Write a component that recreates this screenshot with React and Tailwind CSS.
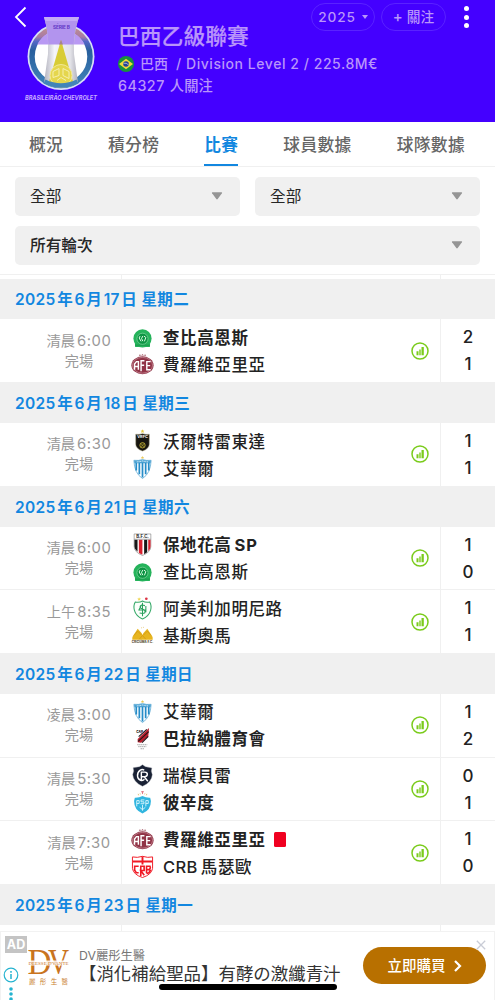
import React from "react";

const days = [
    {
        date: ["2025", "年", "6", "月", "17", "日 星期二"],
        matches: [
            {
                period: "清晨",
                time: "6:00",
                home: { name: "查比高恩斯", logo: "chape", score: 2, win: true },
                away: { name: "費羅維亞里亞", logo: "afe", score: 1 },
            },
        ],
    },
    {
        date: ["2025", "年", "6", "月", "18", "日 星期三"],
        matches: [
            {
                period: "清晨",
                time: "6:30",
                home: { name: "沃爾特雷東達", logo: "volta", score: 1 },
                away: { name: "艾華爾", logo: "avai", score: 1 },
            },
        ],
    },
    {
        date: ["2025", "年", "6", "月", "21", "日 星期六"],
        matches: [
            {
                period: "清晨",
                time: "6:00",
                home: { name: "保地花高", latinAfter: "SP", logo: "botafogo", score: 1, win: true },
                away: { name: "查比高恩斯", logo: "chape", score: 0 },
            },
            {
                period: "上午",
                time: "8:35",
                home: { name: "阿美利加明尼路", logo: "america", score: 1 },
                away: { name: "基斯奧馬", logo: "criciuma", score: 1 },
            },
        ],
    },
    {
        date: ["2025", "年", "6", "月", "22", "日 星期日"],
        matches: [
            {
                period: "凌晨",
                time: "3:00",
                home: { name: "艾華爾", logo: "avai", score: 1 },
                away: { name: "巴拉納體育會", logo: "cap", score: 2, win: true },
            },
            {
                period: "清晨",
                time: "5:30",
                home: { name: "瑞模貝雷", logo: "remo", score: 0 },
                away: { name: "彼辛度", logo: "paysandu", score: 1, win: true },
            },
            {
                period: "清晨",
                time: "7:30",
                home: { name: "費羅維亞里亞", logo: "afe", score: 1, win: true, redCard: true },
                away: { name: "馬瑟歐", latinBefore: "CRB", logo: "crb", score: 0 },
            },
        ],
    },
    { date: ["2025", "年", "6", "月", "23", "日 星期一"], matches: [] },
];

const tabs = [
    { label: "概況" },
    { label: "積分榜" },
    { label: "比賽", active: true },
    { label: "球員數據" },
    { label: "球隊數據" },
];

// Club crests, all drawn on a 24x24 grid
const crests = {
    chape: (
        <>
            <circle cx="12" cy="13" r="9.500" fill="#25b35b" />
            <path d="M4 17.500h16l-.3 4.300H4.300z" fill="#25b35b" />
            <path d="M4.300 20h15.400" stroke="#178d47" strokeWidth=".8" />
            <circle cx="12" cy="13.300" r="5.800" fill="#0c9443" stroke="#8bd8a5" strokeWidth=".7" />
            <path d="M9.500 10.500l-1 2 2 3.500M12.300 10.500L11 13l1.300 2.800M13.500 10.500l2 1.500-1.500 4" stroke="#e4ffe9" strokeWidth="1" fill="none" />
        </>
    ),
    afe: (
        <>
            <path d="M8.500 3.500l.8-1.800.8 1.800M11.200 3l.8-1.800.8 1.800M13.900 3.500l.8-1.800.8 1.800" stroke="#a55a68" strokeWidth=".7" fill="none" />
            <ellipse cx="12" cy="12.800" rx="11.600" ry="9.300" fill="#913447" />
            <ellipse cx="12" cy="12.800" rx="10.500" ry="8.200" fill="none" stroke="#d9a9b3" strokeWidth=".6" />
            <path d="M3.700 17.500v-6l2-2.500h2v8.500M3.700 14h4M10.500 19V8H14M10.500 12.800h3.200M20.500 9h-4v8.500h4M16.500 13.200h3.500" stroke="#fff" strokeWidth="1.500" fill="none" />
        </>
    ),
    volta: (
        <>
            <path d="M12 .3l.6 1.300 1.400.1-1 1 .3 1.400-1.300-.7-1.300.7.3-1.400-1-1 1.400-.1z" fill="#e6cb48" />
            <path d="M5 5.500q3.300.6 7-.6 3.700 1.200 7 .6v10.500q0 4.500-7 7-7-2.500-7-7z" fill="#17150f" stroke="#8c8562" strokeWidth=".5" />
            <text x="12" y="9.500" fontSize="4" fontWeight="700" textAnchor="middle" fill="#fff">VRFC</text>
            <circle cx="12" cy="17" r="2.800" fill="#332e10" stroke="#d0bd3b" strokeWidth=".8" />
            <path d="M10 15l4 4M14 15l-4 4" stroke="#d0bd3b" strokeWidth=".5" />
        </>
    ),
    avai: (
        <>
            <path d="M12 0l.5 1.100 1.200.1-.9.800.3 1.200-1.100-.6-1.100.6.3-1.200-.9-.8 1.200-.1z" fill="#e9c95b" />
            <path d="M3 4.500q5 .6 9-.8 4 1.400 9 .8-.4 13.500-9 19-8.600-5.500-9-19z" fill="#fff" stroke="#5aa9d4" strokeWidth=".8" />
            <path d="M3.200 4.600q5 .5 8.800-.7 3.800 1.200 8.800.7l-.3 3H3.500z" fill="#4da3d3" />
            <path d="M5.500 7v8M8.700 7v12M12 7v15.500M15.300 7v12M18.500 7v8" stroke="#268cc8" strokeWidth="1.800" />
            <path d="M6 6.200l3-.3 3-.7 3 .7 3 .3" stroke="#eff8ff" strokeWidth=".9" fill="none" strokeDasharray="1.200 .6" />
        </>
    ),
    botafogo: (
        <>
            <path d="M3.300 1h17.400v13q0 6-8.700 9.500Q3.300 20 3.300 14z" fill="#fff" stroke="#777" strokeWidth=".6" />
            <text x="12" y="5.600" fontSize="4.500" fontWeight="700" textAnchor="middle" fill="#222">B.F.C.</text>
            <path d="M3.600 7h3.200v12.500Q3.600 17 3.600 14zM13.700 7h3.200v13.200l-3.200 2z" fill="#171717" />
            <path d="M8.200 7h3.700v15.800l-3.700-2zM18 7h2.400v7q0 3-2.400 5z" fill="#d9202f" />
            <path d="M3.500 6.500h17" stroke="#777" strokeWidth=".6" />
        </>
    ),
    america: (
        <>
            <path d="M8.500 .8l.4.900h1l-.7.700.3 1-1-.5-1 .5.300-1-.7-.7h1z" fill="#eed54e" stroke="#eed54e" strokeWidth=".5" />
            <circle cx="16" cy="1.800" r="1.400" fill="#db3344" />
            <path d="M4.500 5.200Q8.500 6.200 12 4.200q3.500 2 7.500 1 2.200 3.500 1 8.500-1.500 6-8.500 9.300-7-3.300-8.500-9.300-1.200-5 1-8.500z" fill="#fbfffc" stroke="#35a968" strokeWidth="1.100" />
            <path d="M12 6v14M14.500 9q-5-1.500-5 1 0 2 2.500 2.500 2.700.8 2.700 2.800 0 2.700-5.700 1.500M8 14l3-6M15.500 9.500v6.500M8 13.500h8" stroke="#29a05c" strokeWidth="1.100" fill="none" />
        </>
    ),
    criciuma: (
        <>
            <path d="M1.300 16.500q-.5-3 1.700-5.500l4-6 4 4.500 1 2 1-2 4-4.500 4 6q2.200 2.500 1.700 5.500z" fill="#e7b51f" />
            <path d="M3 12l4-4.500 4 4M13 11.500l4-4 4 4.500M8.500 16l3.500-4 3.500 4" stroke="#c78d13" strokeWidth=".6" fill="none" />
            <path d="M10.500 4h.7M12.500 3.500h.7" stroke="#d8a72a" strokeWidth=".8" />
            <text x="12" y="20" fontSize="3.200" fontWeight="700" textAnchor="middle" fill="#4c4020" textLength="22.500" lengthAdjust="spacingAndGlyphs">CRICIÚMA E.C.</text>
        </>
    ),
    cap: (
        <>
            <path d="M7 12.500L18.800 1 18 10l-7.500 6.500-3.500-.5z" fill="#b81f2d" />
            <path d="M8 10L16.500 2.500M7.500 15L18.500 4.800M11.500 16.300l6.500-6.500" stroke="#25171a" strokeWidth="1.200" />
            <text x="9" y="6.500" fontSize="4.200" fontWeight="800" textAnchor="middle" fill="#222" textLength="7" lengthAdjust="spacingAndGlyphs">CAP</text>
            <path d="M6.500 18.500h10.500M7.500 20.500h8.500M10 22.700h4" stroke="#999" strokeWidth=".9" strokeDasharray="1.500 .5" />
        </>
    ),
    remo: (
        <>
            <path d="M12 .8l3 2 6.700 1.300q-1.500 3.500.5 7Q21.500 19 12 23.200 2.500 19 1.800 11q2-3.500.5-7L9 2.800z" fill="#192134" stroke="#8b909c" strokeWidth=".4" />
            <path d="M13.800 6.500q-2-1.500-4.500.2Q6.500 9 6.800 12.500T10 17q2.500.8 4-1M10.800 18V8.500h3.500q3 .2 2.700 2.600-.3 2.100-3 2.200h-3M14 13.500l3.500 4.500" stroke="#fff" strokeWidth="1.500" fill="none" />
        </>
    ),
    paysandu: (
        <>
            <path d="M12 .2v3M10.500.8h3" stroke="#df7582" strokeWidth="1" />
            <path d="M7.500 3l.5 1.500M16.500 3L16 4.500M9.500 2.500l.3 1M14.500 2.500l-.3 1" stroke="#ddb966" strokeWidth=".9" />
            <path d="M4 7Q8.500 7.200 12 5.200q3.500 2 8 1.800l.8 3.500q0 9.500-8.800 13-8.800-3.500-8.800-13z" fill="#31b5df" />
            <path d="M6 10v6M6 10h2.500v3H6M15.500 16v-6H18v3h-2.500M12 14.500v6M9 17l3 2.500 3-2.500M14 9.300h-3.500v2h3v2h-3.500" stroke="#e3faff" strokeWidth=".9" fill="none" />
        </>
    ),
    crb: (
        <>
            <path d="M1.500 2q5 1.200 10.500-.6Q17.500 3.200 22.500 2v12q-1 6.500-10.500 9.500Q2.500 20.500 1.500 14z" fill="#fff" stroke="#f01824" strokeWidth="1" />
            <path d="M2 6.800h20M12 1.500V10" stroke="#f01824" strokeWidth="2" />
            <path d="M8 11.800H3.800v4l1.700 2.700H8M10.200 22V11.800h3.500v4.400h-3.500l3.600 5M16.200 19V11.800h3.600l.4 1.700-1 1.700 1 1-1.500 2.300-2.500.8M16.200 15.200h3" stroke="#f01824" strokeWidth="1.700" fill="none" />
        </>
    ),
};

function Crest({ name }) {
    return (
        <svg viewBox="0 0 24 24" className="w-[23px] h-[23px] shrink-0 overflow-visible">
            {crests[name]}
        </svg>
    );
}

function LeagueLogo() {
    return (
        <svg viewBox="0 0 80 96" className="w-[80px] h-[96px] shrink-0 overflow-visible">
            <defs>
                <linearGradient id="ring" x1="0" y1="0" x2="0" y2="1">
                    <stop offset="0" stopColor="#c08f90" />
                    <stop offset=".16" stopColor="#a77aa4" />
                    <stop offset=".24" stopColor="#5566c8" />
                    <stop offset=".4" stopColor="#285f9d" />
                    <stop offset="1" stopColor="#4184b9" />
                </linearGradient>
                <linearGradient id="cup" x1="0" x2="1">
                    <stop offset="0" stopColor="#b2b2bd" />
                    <stop offset=".3" stopColor="#f5f5fa" />
                    <stop offset=".75" stopColor="#e3e3e8" />
                    <stop offset="1" stopColor="#aaa9b5" />
                </linearGradient>
            </defs>
            <circle cx="41" cy="45.500" r="33.500" fill="#d8dff8" />
            <circle cx="41" cy="45.500" r="29" fill="#fff" stroke="url(#ring)" strokeWidth="5.500" />
            <path d="M17.300 33.500a26.500 26.500 0 0 1 47.400 0z" fill="#b999f3" />
            <path d="M24 6h35q-6 18-5 37l4 29q-17 9-34 0l4-29Q29 22 24 6z" fill="url(#cup)" />
            <path d="M24 6h35Q54 20 53.800 33.500H28.300Q28 20 24 6z" fill="#b294ee" />
            <path d="M24 6h35l-1.500 4h-32z" fill="#c4aaf6" />
            <path d="M41 29l13 45q-13 5-26 0z" fill="#d8cc36" />
            <path d="M41 29l2 4.500h-4z" fill="#a5838f" />
            <circle cx="41" cy="64.500" r="11" fill="#e5d64d" stroke="#f3e995" strokeWidth="1" />
            <path d="M33 60.500l6-3v7l-6 2zM43 57.500l6 3v7l-6-3zM37 69.500l4-3 5 3" fill="none" stroke="#f6efae" strokeWidth="1" />
            <path d="M24.500 70.500q16.500 8 33 0" fill="none" stroke="#4184b9" strokeWidth="4.500" />
            <text x="41.500" y="17.500" fontSize="4.800" fontWeight="700" textAnchor="middle" fill="#6138c6" textLength="17">SÉRIE B</text>
            <text x="41" y="88.700" fontSize="6.300" fontStyle="italic" fontWeight="700" textAnchor="middle" fill="#c8adff" textLength="72" lengthAdjust="spacingAndGlyphs">BRASILEIRÃO CHEVROLET</text>
        </svg>
    );
}

function BrazilFlag() {
    return (
        <svg viewBox="0 0 16 16" className="w-4 h-4">
            <circle cx="8" cy="8" r="8" fill="#18913e" />
            <path d="M8 2.700L15 8l-7 5.300L1 8z" fill="#f0d93b" />
            <circle cx="8" cy="8" r="2.800" fill="#244196" />
            <path d="M5.500 7.200q3-.5 5 1.600" stroke="#fff" strokeWidth=".6" fill="none" />
        </svg>
    );
}

function Caret() {
    return (
        <svg viewBox="0 0 12 8" className="w-3 h-2 -mt-[2px]">
            <path d="M1.500.3h9q1 0 .4.900L6.700 7q-.7.800-1.400 0L1.100 1.200Q.5.300 1.500.3z" fill="#959595" />
        </svg>
    );
}

function StatsIcon() {
    return (
        <svg viewBox="0 0 18 18" className="w-[18px] h-[18px]">
            <circle cx="9" cy="9" r="8" fill="none" stroke="#7acb1b" strokeWidth="1.500" />
            <path d="M5.500 9.300h2v4h-2zM8.300 7.500h1.400v5.800H8.300zM10.500 5h2.300v8.300h-2.300z" fill="#7acb1b" />
        </svg>
    );
}

function Select({ label, bold }) {
    return (
        <div className="flex-1 h-[39px] rounded-[5px] bg-[#f0f0f0] flex items-center justify-between pl-[15px] pr-[17px]">
            <span className={"text-[15.700px] text-[#262626] pt-px " + (bold ? "font-medium" : "font-normal")}>{label}</span>
            <Caret />
        </div>
    );
}

function Team({ team }) {
    return (
        <div className="h-[27px] flex items-center">
            <Crest name={team.logo} />
            <span
                className={
                    "ml-[9px] pt-[2px] flex gap-[3px] text-[16.500px] tracking-[0.600px] text-[#222] whitespace-nowrap " +
                    (team.win ? "font-bold" : "font-medium")
                }
            >
                {team.latinBefore && <span className="tracking-[0.400px]">{team.latinBefore}</span>}
                <span>{team.name}</span>
                {team.latinAfter && <span className="tracking-[1px]">{team.latinAfter}</span>}
            </span>
            {team.redCard && <span className="ml-[8px] w-[12px] h-[15px] rounded-[1.500px] bg-[#f00020]" />}
        </div>
    );
}

function Match({ match }) {
    return (
        <div className="h-[63.670px] flex border-b border-[#f0f0f0]">
            <div className="w-[122px] pl-[37px] border-r border-[#f0f0f0] flex flex-col items-center justify-center text-[14.200px] leading-5 text-[#999]">
                <div className="flex gap-[2px]">
                    <span>{match.period}</span>
                    <span className="text-[14.800px] tracking-[0.600px]">{match.time}</span>
                </div>
                <div>完場</div>
            </div>
            <div className="flex-1 pl-[9px] flex flex-col justify-center">
                <Team team={match.home} />
                <Team team={match.away} />
            </div>
            <div className="w-[29px] flex items-center">
                <StatsIcon />
            </div>
            <div className="w-[55px] pt-px border-l border-[#f0f0f0] flex flex-col justify-center text-center text-[17px] leading-[27px] font-medium text-[#222]">
                <div>{match.home.score}</div>
                <div>{match.away.score}</div>
            </div>
        </div>
    );
}

// Sliver of a row that is cut off by the edge of the list
function RowSliver({ className }) {
    return (
        <div className={"flex " + className}>
            <div className="w-[122px] border-r border-[#f0f0f0]" />
            <div className="flex-1" />
            <div className="w-[55px] border-l border-[#f0f0f0]" />
        </div>
    );
}

export default function App() {
    return (
        <div className="w-[495px] h-[1000px] overflow-hidden bg-white flex flex-col font-['Inter','Noto_Sans_CJK_TC',sans-serif]">

            {/* League header */}
            <header className="h-[122px] shrink-0 bg-[#4400ff] flex text-[#b995fa]">
                <svg viewBox="0 0 14 22" className="w-[14px] h-[22px] ml-[14px] mt-[6px] -mr-[8px] z-10 shrink-0">
                    <path d="M11.500 1.500L2 11l9.500 9.500" fill="none" stroke="#fff" strokeWidth="1.800" />
                </svg>
                <div className="mt-[11px]">
                    <LeagueLogo />
                </div>
                <div className="flex-1 ml-[18px]">
                    <div className="h-[22px] flex items-start justify-end pt-[3px] pr-[26px]">
                        <div className="w-[64px] h-[28px] shrink-0 rounded-full border border-[#5a22ff] flex items-center justify-center gap-[6px] text-[13.700px] font-medium tracking-[0.800px]">
                            2025
                            <svg viewBox="0 0 6 4" className="w-[6px] h-1">
                                <path d="M0 0h6L3 4z" fill="currentColor" />
                            </svg>
                        </div>
                        <div className="w-[65px] h-[28px] shrink-0 ml-[6px] rounded-full border border-[#5a22ff] flex items-center justify-center gap-[4px] text-[13.700px] font-medium">
                            <span className="text-[15px]">+</span>
                            <span>關注</span>
                        </div>
                        <div className="flex flex-col gap-[3.500px] ml-[18px] pt-[3px]">
                            <span className="w-[5px] h-[5px] rounded-full bg-white" />
                            <span className="w-[5px] h-[5px] rounded-full bg-white" />
                            <span className="w-[5px] h-[5px] rounded-full bg-white" />
                        </div>
                    </div>
                    <h1 className="text-[21.800px] leading-[28px] font-medium [-webkit-text-stroke:0.200px]">巴西乙級聯賽</h1>
                    <div className="flex items-center h-[23px] mt-[2px] text-[14px] font-medium tracking-[0.550px]">
                        <BrazilFlag />
                        <span className="ml-[6px] tracking-[0]">巴西</span>
                        <span className="ml-[8px]">/ Division Level 2 / 225.8M€</span>
                    </div>
                    <div className="text-[14.300px] leading-[22px] font-medium flex gap-[5px]">
                        <span className="tracking-[0.500px]">64327</span>
                        <span>人關注</span>
                    </div>
                </div>
            </header>

            {/* Tabs */}
            <nav className="h-[45px] shrink-0 border-b border-[#f0f0f0] flex justify-between pl-[29px] pr-[30px] text-[16.700px] tracking-[0.400px]">
                {tabs.map((tab) => (
                    <div
                        key={tab.label}
                        className={
                            "h-[44px] pt-[5px] flex items-center border-b-2 " +
                            (tab.active
                                ? "font-bold text-[#1287e0] border-[#1287e0]"
                                : "font-medium text-[#666] border-transparent")
                        }
                    >
                        {tab.label}
                    </div>
                ))}
            </nav>

            {/* Filters */}
            <div className="h-[108px] shrink-0 border-b border-[#f0f0f0] px-[15px] pt-[10px] flex flex-col gap-[10px]">
                <div className="h-[39px] flex gap-[15px]">
                    <Select label="全部" />
                    <Select label="全部" />
                </div>
                <div className="h-[39px] flex">
                    <Select label="所有輪次" bold />
                </div>
            </div>

            {/* Match list */}
            <main className="h-[656px] shrink-0 overflow-hidden">
                <RowSliver className="h-[4.400px]" />
                {days.map((day) => (
                    <section key={day.date.join("")}>
                        <h2 className="h-10 bg-[#f0f0f0] pl-[15px] pt-px flex items-center gap-[1.500px] text-[15.500px] font-semibold text-[#1287e0] whitespace-pre">
                            {day.date.map((part, i) => (
                                <span key={i} className="tracking-[0.350px]">{part}</span>
                            ))}
                        </h2>
                        {day.matches.map((match, i) => (
                            <Match key={i} match={match} />
                        ))}
                    </section>
                ))}
                <RowSliver className="h-[6px]" />
            </main>

            {/* Ad banner */}
            <footer className="relative h-[69px] shrink-0 border-t border-x border-[#f2f2f2] bg-white flex">
                <div className="w-[27px] pt-[4px] pl-[4px] shrink-0">
                    <div className="w-[22px] h-[17px] bg-[#c4c4c4] text-white text-[12.500px] font-bold leading-[17px] text-center">AD</div>
                    <svg viewBox="0 0 16 34" className="w-4 h-[34px] mt-[14px] -ml-[2px]">
                        <circle cx="8" cy="8" r="6.800" fill="#fff" stroke="#25b3d0" strokeWidth="1.200" />
                        <path d="M8 7v5M8 4v1.800" stroke="#25b3d0" strokeWidth="1.500" />
                        <circle cx="8" cy="22" r="1.800" fill="#25b3d0" />
                        <circle cx="8" cy="27" r="1.800" fill="#25b3d0" />
                        <circle cx="8" cy="32" r="1.800" fill="#25b3d0" />
                    </svg>
                </div>
                <svg viewBox="0 0 41 36" className="w-[41px] h-[36px] mt-[18px] shrink-0 overflow-visible">
                    <g className="font-['Liberation_Serif',serif]" fill="#c97420">
                        <text x="-.5" y="24" fontSize="35" textLength="24" lengthAdjust="spacingAndGlyphs">D</text>
                        <text x="20" y="24" fontSize="35" textLength="21" lengthAdjust="spacingAndGlyphs">V</text>
                        <path d="M0 10.500h41v5H0z" fill="#fff" fillOpacity=".85" />
                        <text x="20.500" y="14.800" fontSize="4.800" textAnchor="middle" textLength="40" lengthAdjust="spacingAndGlyphs">DEESSE D'VANTE</text>
                    </g>
                    <text x="20.500" y="33.500" fontSize="6.500" textAnchor="middle" fill="#c97e2c" textLength="39">麗彤生醫</text>
                </svg>
                <div className="flex-1 ml-[10px] pt-[15px] whitespace-nowrap">
                    <div className="text-[12.300px] leading-[17px] text-[#777]">DV麗彤生醫</div>
                    <div className="text-[17.450px] leading-[20px] text-[#333]">【消化補給聖品】有酵の激纖青汁</div>
                </div>
                <button className="w-[123px] h-[37px] mt-[15px] mr-[8px] shrink-0 rounded-full bg-[#b87000] text-white text-[14.500px] font-medium flex items-center justify-center gap-[8px]">
                    立即購買
                    <svg viewBox="0 0 8 12" className="w-2 h-3">
                        <path d="M1 1l5 5-5 5" fill="none" stroke="#fff" strokeWidth="2.200" />
                    </svg>
                </button>
                <svg viewBox="0 0 10 10" className="absolute right-[8px] top-[8px] w-[10px] h-[10px]">
                    <path d="M.8.800l8.400 8.400M9.200.800L.8 9.200" stroke="#c9ccd6" strokeWidth="1.300" />
                </svg>
                {/* Home indicator */}
                <div className="absolute left-[158px] top-[52px] w-[178px] h-[6px] rounded-full bg-black" />
            </footer>
        </div>
    );
}
